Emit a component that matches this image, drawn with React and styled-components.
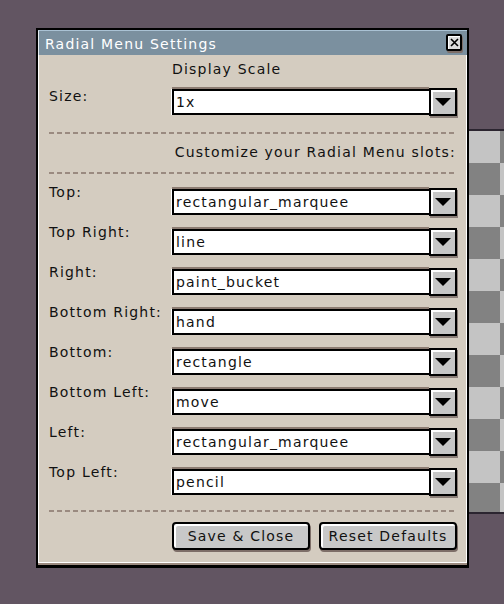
import React from 'react'
import styled, { createGlobalStyle } from 'styled-components'

const GlobalStyle = createGlobalStyle`
  html, body {
    margin: 0;
    padding: 0;
    background: #625562;
  }
  body {
    width: 504px;
    height: 604px;
    overflow: hidden;
    font-family: "DejaVu Sans", "Noto Sans", sans-serif;
  }
`

const slots = [
  ['Top:', 'rectangular_marquee'],
  ['Top Right:', 'line'],
  ['Right:', 'paint_bucket'],
  ['Bottom Right:', 'hand'],
  ['Bottom:', 'rectangle'],
  ['Bottom Left:', 'move'],
  ['Left:', 'rectangular_marquee'],
  ['Top Left:', 'pencil'],
]

export default function App() {
  return (
    <Stage>
      <GlobalStyle />
      <Canvas />
      <Window>
        <TitleBar>
          <Title>Radial Menu Settings</Title>
          <CloseButton aria-label="close">
            <svg width="9" height="9" viewBox="0 0 9 9">
              <path d="M1 1L8 8M8 1L1 8" stroke="#000" strokeWidth="1.6" />
            </svg>
          </CloseButton>
        </TitleBar>
        <Content>
          <Form>
            <Hint>Display Scale</Hint>
            <Label $shift={-1}>Size:</Label>
            <Select value="1x" />
          </Form>
          <Separator $gap={17} />
          <Caption>Customize your Radial Menu slots:</Caption>
          <Separator $gap={12} />
          <Form $slots>
            {slots.map(([label, value], i) => (
              <React.Fragment key={i}>
                <Label $shift={-5}>{label}</Label>
                <Select value={value} />
              </React.Fragment>
            ))}
          </Form>
          <Separator $gap={15} />
          <Actions>
            <Button>Save &amp; Close</Button>
            <Button>Reset Defaults</Button>
          </Actions>
        </Content>
      </Window>
    </Stage>
  )
}

function Select({ value }) {
  return (
    <SelectWrap>
      <Field>{value}</Field>
      <DropButton>
        <svg width="16" height="8" viewBox="0 0 16 8">
          <path d="M0 0H16L8 8Z" fill="#000" />
        </svg>
      </DropButton>
    </SelectWrap>
  )
}

const Stage = styled.div`
  position: relative;
  width: 504px;
  height: 604px;
  overflow: hidden;
  padding: 28px 0 0 36px;
  box-sizing: border-box;
`

const Canvas = styled.div`
  position: absolute;
  left: 338px;
  top: 129px;
  width: 200px;
  height: 381px;
  border: 2px solid #2b2530;
  background: repeating-conic-gradient(#828282 0 25%, #c4c4c4 0 50%) 0 0 / 64px 64px;
`

const Window = styled.div`
  position: relative;
  width: 433px;
  box-sizing: border-box;
  border: 2px solid #000;
  background: #d4ccc0;
  border-bottom-width: 3px;
`

const TitleBar = styled.div`
  display: flex;
  align-items: center;
  justify-content: space-between;
  height: 24px;
  padding: 0 5px 0 6px;
  background: #7b909f;
  border-top: 1px solid #aac2d4;
  border-left: 1px solid #e6eef2;
`

const Title = styled.div`
  color: #fff;
  font-size: 14px;
  letter-spacing: 1.2px;
  padding-top: 1px;
`

const CloseButton = styled.div`
  display: flex;
  align-items: center;
  justify-content: center;
  width: 12px;
  height: 13px;
  margin-top: -2px;
  background: #dcdcdc;
  border: 2px solid #000;
  border-radius: 2px;
  box-shadow: inset 1px 1px 0 #fff, 1px 2px 0 #7d6e68;
`

const Content = styled.div`
  display: flex;
  flex-direction: column;
  padding: 6px 9px 12px 10px;
  border-left: 1px solid #fff;
  border-right: 1px solid #fff;
  border-bottom: 1px solid #fff;
  box-shadow: 0 2px 0 #9c8b80;
  margin-bottom: 2px;
`

const Form = styled.div`
  display: grid;
  grid-template-columns: 123px 285px;
  row-gap: ${p => (p.$slots ? '14px' : '12px')};
  align-items: start;
`

const Text = styled.div`
  font-size: 14px;
  line-height: 16px;
  letter-spacing: 1.2px;
  color: #111;
`

const Label = styled(Text)`
  margin-top: ${p => p.$shift}px;
`

const Hint = styled(Text)`
  grid-column: 2;
`

const Caption = styled(Text)`
  align-self: flex-end;
  margin: 10px 1px 0 0;
`

const Separator = styled.div`
  height: 2px;
  margin-top: ${p => p.$gap}px;
  background: repeating-linear-gradient(90deg, #9a8a80 0 5px, transparent 5px 8px);
  & + ${Form} {
    margin-top: 15px;
  }
`

const SelectWrap = styled.div`
  display: flex;
  height: 26px;
`

const Field = styled.div`
  flex: 1;
  display: flex;
  align-items: center;
  padding: 0 2px;
  background: #fff;
  border: 2px solid #000;
  border-right: none;
  box-shadow: -1px 0 0 #fff, 0 -2px 0 #8c7c72;
  font-size: 14px;
  letter-spacing: 1.2px;
  color: #111;
`

const DropButton = styled.div`
  display: flex;
  align-items: center;
  justify-content: center;
  width: 24px;
  margin-top: -1px;
  margin-bottom: -1px;
  background: #c6c6c6;
  border: 2px solid #000;
  box-shadow: inset 2px 2px 0 #fff, 1px 2px 0 #8a7e78;
`

const Actions = styled.div`
  display: flex;
  justify-content: flex-end;
  gap: 9px;
  margin-top: 10px;
`

const Button = styled(Text)`
  display: flex;
  align-items: center;
  justify-content: center;
  width: 134px;
  height: 24px;
  background: #c8c8c8;
  border: 2px solid #000;
  border-radius: 4px;
  box-shadow: inset 2px 2px 0 #fff, 1px 2px 0 #7d6e68;
`
